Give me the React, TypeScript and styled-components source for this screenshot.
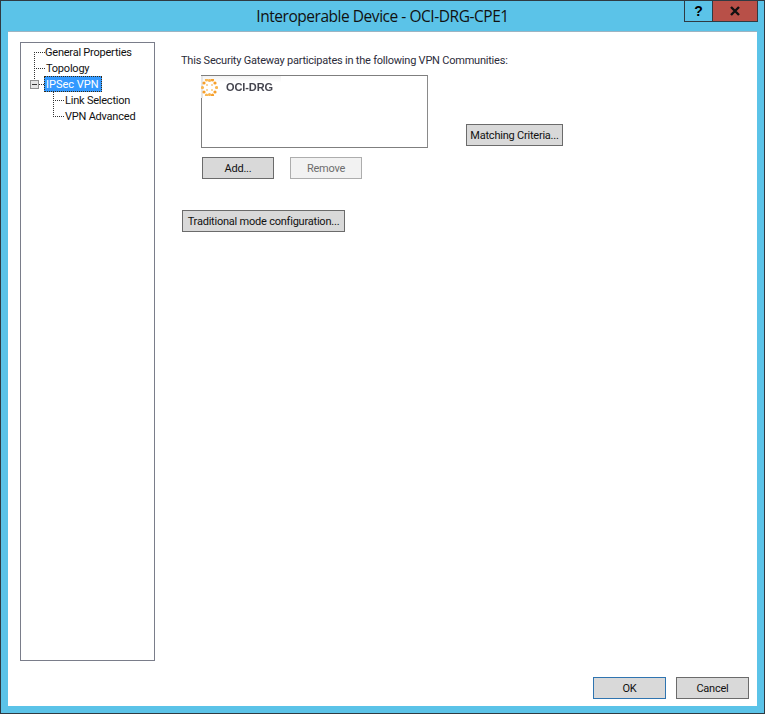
import React from "react";
import styled, { createGlobalStyle } from "styled-components";

const Global = createGlobalStyle`
  html, body { margin: 0; padding: 0; background: #5bc3e8; }
  * { box-sizing: border-box; }
`;

const Win = styled.div`
  width: 765px; height: 714px;
  display: flex; flex-direction: column;
  background: #5bc3e8;
  border: 1px solid #2f3a42;
  font-family: Roboto, "Liberation Sans", sans-serif;
  font-size: 11px; letter-spacing: -0.22px; color: #111;
`;
const TitleBar = styled.div`
  height: 30px; flex: none;
  display: grid; grid-template-columns: 1fr auto 1fr;
`;
const Title = styled.div`
  font-size: 15.5px; line-height: 30px; color: #111;
  font-family: "Open Sans", sans-serif; letter-spacing: -0.46px;
`;
const Caption = styled.div`
  display: flex; justify-content: flex-end; align-items: flex-start; padding-right: 6px;
`;
const CapBtn = styled.div<{ $close?: boolean }>`
  height: 21px; width: ${p => (p.$close ? "46px" : "29px")};
  margin-left: ${p => (p.$close ? "-1px" : "0")};
  background: ${p => (p.$close ? "#b85048" : "transparent")};
  border: 1px solid #2f3a42; border-top: none;
  display: flex; align-items: center; justify-content: center;
  font: bold 14px "Liberation Sans", sans-serif; color: #000;
`;
const Client = styled.div`
  flex: 1; margin: 0 7px 7px 7px;
  background: #fff; border-top: 1px solid #9db4c2;
  display: flex; flex-direction: column;
`;
const Main = styled.div`
  flex: 1; display: flex; padding: 10px 0 0 12px; min-height: 0;
`;
const Tree = styled.div`
  position: relative;
  width: 135px; height: 619px; flex: none;
  border: 1px solid #7a7d8a; background: #fff;
`;
const Lines = styled.svg`
  position: absolute; left: 0; top: 0;
`;
const TreeList = styled.div`
  position: relative; padding-top: 2px;
`;
const TreeRow = styled.div<{ $indent: number }>`
  display: flow-root;
  height: 16px; line-height: 16px; white-space: nowrap;
  padding-left: ${p => p.$indent}px;
`;
const Selected = styled.span`
  display: flex; align-items: center; width: 58px; height: 16px; margin: -1px 0 0 -2px; letter-spacing: 0;
  background: #3399ff; color: #fff; padding: 1px 0 0 1px;
  border: 1px dotted #3a2a10;
`;
const Panel = styled.div`
  flex: 1; padding: 11px 0 0 26px; display: flex; flex-direction: column; align-items: flex-start;
`;
const Intro = styled.div`
  line-height: 16px; height: 16px; color: #2c2c3a; white-space: nowrap;
`;
const Communities = styled.div`
  display: flex; margin: 6px 0 0 20px; align-items: flex-end;
`;
const ListBox = styled.div`
  width: 227px; height: 73px;
  border: 1px solid #7f7f7f; border-right-color: #8a8a8a;
  position: relative;
`;
const Item = styled.div`
  display: flex; align-items: center; gap: 8px;
  height: 22px; width: 80px;
  background: linear-gradient(#f3f3f3, #fff 30%);
  box-shadow: inset 2px 0 0 #e6e6e6;
  margin-left: -1px;
  filter: blur(0.7px);
`;
const ItemText = styled.span`
  font: bold 11px "Liberation Sans", sans-serif; color: #45454f; letter-spacing: -0.1px;
`;
const Btn = styled.div<{ $w: number; $disabled?: boolean; $default?: boolean }>`
  width: ${p => p.$w}px; height: 22px; flex: none;
  background: ${p => (p.$disabled ? "#f2f2f2" : "#d9d9d9")};
  border: 1px solid ${p => (p.$disabled ? "#adadad" : p.$default ? "#2f74b0" : "#6b6b6b")};
  color: ${p => (p.$disabled ? "#6d6d6d" : "#111")};
  display: flex; align-items: center; justify-content: center;
  white-space: nowrap;
`;
const MatchBtn = styled(Btn)`
  margin: 0 0 2px 38px;
`;
const AddRow = styled.div`
  display: flex; gap: 16px; margin: 9px 0 0 21px;
`;
const TraditionalBtn = styled(Btn)`
  margin: 31px 0 0 1px;
`;
const Footer = styled.div`
  height: 45px; flex: none; display: flex; justify-content: flex-end; gap: 10px; padding: 16px 8px 0 0;
`;
const FootBtn = styled(Btn)`
  height: 22px; padding-top: 1px;
`;

const outerDots = [
  [8.5, 1.5], [14, 4], [15.5, 8.5], [14, 13], [8.5, 15.5], [3, 13], [1.5, 8.5], [3, 4],
  [5.5, 1], [11.5, 1], [5.5, 16], [11.5, 16],
];
const innerDots = [[6, 6], [11, 6], [6, 11], [11, 11]];

export default function App() {
  return (
    <Win>
      <Global />
      <TitleBar>
        <div />
        <Title>Interoperable Device - OCI-DRG-CPE1</Title>
        <Caption>
          <CapBtn>?</CapBtn>
          <CapBtn $close>
            <svg width="12" height="10" viewBox="0 0 12 10">
              <path d="M2 1 L10 9 M10 1 L2 9" stroke="#111" strokeWidth="2.4" />
            </svg>
          </CapBtn>
        </Caption>
      </TitleBar>
      <Client>
        <Main>
          <Tree>
            <Lines width="133" height="120" viewBox="0 0 133 120">
              <g stroke="#333" strokeWidth="1" strokeDasharray="1 1" fill="none">
                <path d="M13.5 9 V37" />
                <path d="M13 9.5 H24" />
                <path d="M13 25.5 H24" />
                <path d="M18 41.5 H23" />
                <path d="M32.5 49 V73" />
                <path d="M32 57.5 H43" />
                <path d="M32 73.5 H43" />
              </g>
              <rect x="9.5" y="37.5" width="8" height="8" fill="#e4e4e4" stroke="#8e8e8e" />
              <path d="M11 41.5 H16" stroke="#333" />
            </Lines>
            <TreeList>
              <TreeRow $indent={24}>General Properties</TreeRow>
              <TreeRow $indent={25}>Topology</TreeRow>
              <TreeRow $indent={25}><Selected>IPSec VPN</Selected></TreeRow>
              <TreeRow $indent={44}>Link Selection</TreeRow>
              <TreeRow $indent={44}>VPN Advanced</TreeRow>
            </TreeList>
          </Tree>
          <Panel>
            <Intro>This Security Gateway participates in the following VPN Communities:</Intro>
            <Communities>
              <ListBox>
                <Item>
                  <svg width="17" height="17" viewBox="0 0 17 17">
                    {outerDots.map(([x, y], i) => (
                      <circle key={i} cx={x} cy={y} r="1.6" fill={i % 2 ? "#f6a02c" : "#f9b650"} />
                    ))}
                    {innerDots.map(([x, y], i) => (
                      <circle key={i} cx={x} cy={y} r="1" fill="#f9c77c" />
                    ))}
                  </svg>
                  <ItemText>OCI-DRG</ItemText>
                </Item>
              </ListBox>
              <MatchBtn $w={97}>Matching Criteria...</MatchBtn>
            </Communities>
            <AddRow>
              <Btn $w={72}>Add...</Btn>
              <Btn $w={72} $disabled>Remove</Btn>
            </AddRow>
            <TraditionalBtn $w={163}>Traditional mode configuration...</TraditionalBtn>
          </Panel>
        </Main>
        <Footer>
          <FootBtn $w={73} $default>OK</FootBtn>
          <FootBtn $w={73}>Cancel</FootBtn>
        </Footer>
      </Client>
    </Win>
  );
}
